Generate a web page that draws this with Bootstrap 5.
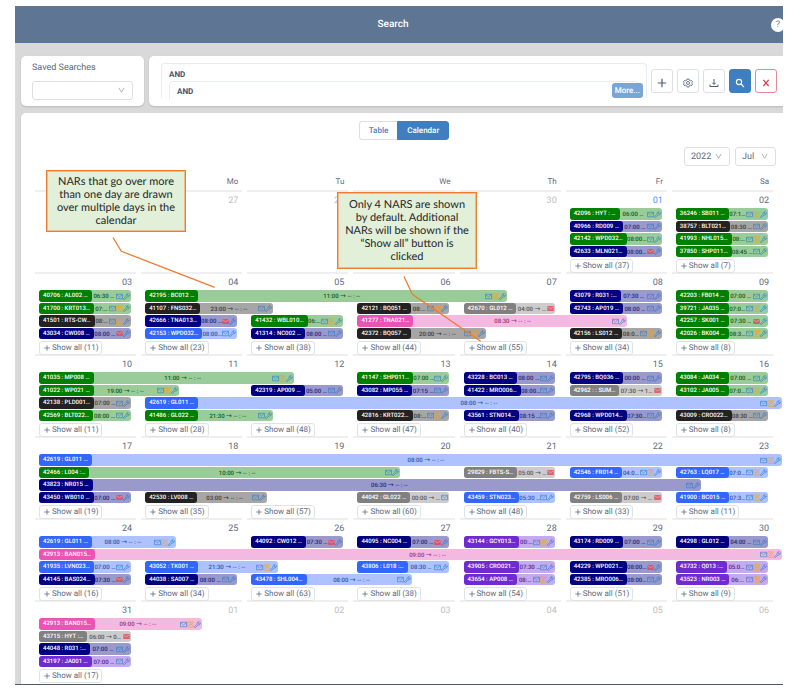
<!DOCTYPE html>
<html lang="en">
<head>
<meta charset="utf-8">
<meta name="viewport" content="width=device-width, initial-scale=1">
<title>Search</title>
<link href="https://cdn.jsdelivr.net/npm/bootstrap@5.3.0/dist/css/bootstrap.min.css" rel="stylesheet">
<style>
  body { background: #fff; font-family: Roboto, "Liberation Sans", sans-serif; font-size: 8px; line-height: 12px; color: #5c6b82; text-rendering: geometricPrecision; }
  button, select { text-rendering: inherit; }
  .app-frame { margin: 6px 28px 6px 15px; background: #d9d9d9; border-bottom: 1px solid #4c5a6e; }
  .app-top { height: 37px; background: #5f7594; color: #fff; }
  .app-top h1 { font-size: 10px; line-height: 12px; font-weight: 500; }
  .help-btn { width: 14px; height: 14px; margin-right: -2px; background: #fff; color: #5f7594; font-size: 9px; line-height: 14px; }
  .query-strip { gap: 5px; padding-left: 6px; margin: 13px 0 7px; height: 50px; }
  .panel { background: #fff; box-shadow: 0 1px 2px rgba(0,0,0,.15); }
  .saved-panel { width: 123px; border-radius: 5px; padding: 6px 11px; }
  .saved-panel .pick { margin-top: 7px; }
  .query-panel { border-radius: 5px 0 0 5px; padding: 7px 6px 0 12px; }
  .saved-panel label { font-size: 9px; font-weight: 400; color: #52688a; }
  .form-select.pick { height: 19px; padding: 0 16px 0 6px; font-size: 9px; line-height: 12px; color: #5c6b82; border: 1px solid #dfdfdf; border-radius: 3px;
    background-image: url("data:image/svg+xml,%3csvg xmlns='http://www.w3.org/2000/svg' viewBox='0 0 8 8'%3e%3cpath fill='none' stroke='%23aaa' d='M1 1l3 5 3-5'/%3e%3c/svg%3e");
    background-position: right 7px center; background-size: 7px 7px; }
  .pick-year { width: 46px; } .pick-month { width: 41px; }
  .rule { border: 1px solid #e4eef7; border-bottom: 0; border-radius: 4px 4px 0 0; padding: 5px 7px 0; height: 35px; color: #3f5270; font-weight: 700; }
  .rule .rule { height: 18px; padding-top: 4px; }
  .more-btn { right: 3px; bottom: 0; height: 15px; padding: 0 3px; font-size: 8px; line-height: 13px; font-weight: 500; color: #fff; background: #7aa6d6; border-radius: 3px; }
  .tools { padding: 6px 0 0 4px; }
  .tool { width: 22px; height: 24px; border: 1px solid #dcdfe4; border-radius: 3px; color: #4c5d78; background: #fff; }
  .tool svg { width: 10px; height: 10px; }
  .tool-go { background: #3f7fc1; border-color: #3f7fc1; color: #fff; }
  .tool-clear { border-color: #e58a94; color: #dc3545; }
  .main-panel { border-radius: 5px 0 0 0; margin-left: 6px; padding: 8px 7px 0 11px; }
  .view-btn { height: 19px; padding: 0 9px; font-size: 8px; line-height: 12px; font-weight: 500; color: #4a86c8; border: 1px solid #dfdfdf; border-radius: 3px; }
  .view-btn.active { background: #3f7fc1; border-color: #3f7fc1; color: #fff; }
  .pickers { gap: 5px; margin-top: 7px; }
  .cal { margin: 0 -2px 0 3px; }
  .cal-grid { grid-template-columns: repeat(7, minmax(0, 1fr)); }
  .dow { margin-right: 5px; padding: 10px 4px 2px; border-bottom: 2px solid #efefef; text-align: right; }
  .daynum { height: 16px; padding: 2px 9px 0 0; font-size: 9px; line-height: 14px; text-align: right; }
  .daynum.off { color: #bdbdbd; } .daynum.now { color: #4a96f0; }
  .lanes { height: 49px; grid-template-rows: repeat(4, minmax(0, 1fr)); row-gap: 1px; }
  .foot { height: 17px; margin-right: 5px; padding: 2px 0 0 4px; border-bottom: 2px solid #efefef; }
  .week:last-child .foot { border-color: #fff; }
  .all-btn { height: 14px; padding: 0 3px 0 4px; font-size: 8px; line-height: 12px; color: #5c6b82; border: 1px solid #e2e2e2; border-radius: 3px; background: #fff; }
  .all-btn svg { width: 6px; height: 6px; margin-right: 2px; }
  .ev { margin-left: 4px; border-radius: 3px; font-size: 6px; line-height: 11px; padding-right: 1px; white-space: nowrap; background: var(--soft); color: var(--ink); z-index: 1; }
  .ev-name { padding: 0 4px; color: #fff; background: var(--full); border-radius: 3px; font-weight: 500; }
  .ev-time { padding-top: 1px; font-weight: 500; }
  .arr { font-family: "DejaVu Sans", sans-serif; font-size: 7px; line-height: 1; }
  .ev svg { width: 7px; height: 7px; margin-top: 1px; opacity: .8; }
  .g { --full: #008000; --soft: #99cc99; --ink: #14581c; }
  .n { --full: #000080; --soft: #9999cc; --ink: #26267c; }
  .k { --full: #222; --soft: #a6a6a6; --ink: #3a3a3a; }
  .b { --full: #3366ff; --soft: #adc2ff; --ink: #35529c; }
  .p { --full: #e855b5; --soft: #f4b9e1; --ink: #a3307c; }
  .s { --full: #808080; --soft: #cccccc; --ink: #555; }
  .v { --full: #6f2ad1; --soft: #c5aaed; --ink: #55278f; }
  .note { z-index: 3; width: 140px; border: 1px solid #ed7d31; outline: 1px solid #f6b78b; outline-offset: -2px; background: #e2efd9; color: #262626; font-family: Lato, "Open Sans", sans-serif; font-size: 11px; line-height: 13px; text-align: center; padding: 4px 0; white-space: nowrap; }
  .note-days { left: 31px; top: 164px; }
  .note-all { left: 322px; top: 186px; padding: 5px 0; }
  .leaders { z-index: 4; left: 0; top: 0; width: 520px; height: 360px; pointer-events: none; }
</style>
<script src="https://cdn.jsdelivr.net/npm/bootstrap@5.3.0/dist/js/bootstrap.bundle.min.js"></script>
</head>
<body>
<svg class="d-none" xmlns="http://www.w3.org/2000/svg">
  <symbol id="i-e" viewBox="0 0 14 14"><path d="M1 2.500h12v9H1zM1.500 3L7 8l5.500-5" fill="none" stroke="#2f7cc9" stroke-width="1.500"/></symbol>
  <symbol id="i-r" viewBox="0 0 14 14"><path d="M.5 2h13v10H.5z" fill="#e04a58"/><path d="M1 3.500l6 4 6-4" fill="none" stroke="#f4b0b5" stroke-width="1.400"/></symbol>
  <symbol id="i-x" viewBox="0 0 14 14"><path d="M8 1.800H1.500v10.700h10.700V7M5 9l.6-2.700L11.300.8l1.800 1.800-5.600 5.600z" fill="none" stroke="#f2a020" stroke-width="1.800"/></symbol>
  <symbol id="i-w" viewBox="0 0 14 14"><path d="M1.200 11.200l5-5C5.500 3.500 7.500 1 10.500 1.300L8.700 3.400l.4 1.700 1.700.4 2.100-1.900c.3 3-2.100 5-4.800 4.300l-5 5c-1.300.8-2.700-.5-1.900-1.700z" fill="none" stroke="#2f7cc9" stroke-width="1.500"/></symbol>
  <symbol id="i-plus" viewBox="0 0 10 10"><path d="M5 .5v9M.5 5h9" fill="none" stroke="currentColor" stroke-width="1.300"/></symbol>
</svg>

<div class="app-frame position-relative overflow-hidden">
  <header class="app-top d-flex align-items-center">
    <h1 class="flex-grow-1 text-center m-0">Search</h1>
    <button type="button" class="help-btn btn p-0 border-0 rounded-circle" aria-label="Help">?</button>
  </header>

  <section class="query-strip d-flex">
    <div class="panel saved-panel flex-shrink-0">
      <label for="saved" class="d-block">Saved Searches</label>
      <select id="saved" class="form-select pick"><option></option></select>
    </div>
    <div class="panel query-panel flex-grow-1 d-flex">
      <div class="rule flex-grow-1 position-relative">
        AND
        <div class="rule">AND</div>
        <button type="button" class="more-btn btn border-0 position-absolute">More...</button>
      </div>
      <div class="tools d-flex gap-1">
        <button type="button" class="tool btn p-0" aria-label="Add"><svg viewBox="0 0 10 10"><path d="M5 .8v8.400M.8 5h8.400" stroke="currentColor" stroke-width="1.200" fill="none"/></svg></button>
        <button type="button" class="tool btn p-0" aria-label="Settings"><svg viewBox="0 0 20 20" fill="none" stroke="currentColor" stroke-width="1.600"><path d="M8 2h4l.6 2.500 2 1.100 2.500-.7 2 3.400L17.200 10l1.900 1.700-2 3.400-2.500-.7-2 1.100L12 18H8l-.6-2.500-2-1.100-2.500.7-2-3.400L2.800 10 .9 8.300l2-3.400 2.500.7 2-1.100z"/><circle cx="10" cy="10" r="3"/></svg></button>
        <button type="button" class="tool btn p-0" aria-label="Download"><svg viewBox="0 0 10 10" fill="none" stroke="currentColor"><path d="M5 1v5M3.300 4.800L5 6.500l1.700-1.700M1 6.500v2h8v-2"/></svg></button>
        <button type="button" class="tool tool-go btn p-0" aria-label="Search"><svg viewBox="0 0 10 10" fill="none" stroke="currentColor" stroke-width="1.100"><circle cx="4" cy="4" r="2.600"/><path d="M6 6l3 3"/></svg></button>
        <button type="button" class="tool tool-clear btn p-0" aria-label="Clear"><svg viewBox="0 0 10 10" fill="none" stroke="currentColor" stroke-width="1.200"><path d="M2.300 1.800l5.400 6.400M7.700 1.800L2.300 8.200"/></svg></button>
      </div>
    </div>
  </section>

  <main class="panel main-panel">
    <div class="d-flex justify-content-center" role="group" aria-label="View">
      <button type="button" class="view-btn btn rounded-end-0 border-end-0">Table</button>
      <button type="button" class="view-btn btn rounded-start-0 active">Calendar</button>
    </div>
    <div class="pickers d-flex justify-content-end">
      <select class="form-select pick pick-year" aria-label="Year"><option>2022</option></select>
      <select class="form-select pick pick-month" aria-label="Month"><option>Jul</option></select>
    </div>
    <div class="cal" id="cal">
      <div class="d-grid cal-grid">
        <div class="dow"></div><div class="dow">Mo</div><div class="dow">Tu</div><div class="dow">We</div><div class="dow">Th</div><div class="dow">Fr</div><div class="dow">Sa</div>
      </div>
    </div>
  </main>

  <aside class="note note-days position-absolute">NARs that go over more<br>than one day are drawn<br>over multiple days in the<br>calendar</aside>
  <aside class="note note-all position-absolute">Only 4 NARS are shown<br>by default. Additional<br>NARs will be shown if the<br>“Show all” button is<br>clicked</aside>
  <svg class="leaders position-absolute" viewBox="0 0 520 360" fill="none" stroke="#ed7d31" stroke-width="1.300">
    <path d="M98 231.500L106.300 245.300L199.700 281.300"/><path d="M389 270.500L397.300 288.300L465.700 335.300"/>
  </svg>
</div>

<script>
  // Event: [first day column, lane, colour, name, time, icons, length in days]
  const T = ' → -- : --';
  const weeks = [
    { days: ['', 27, 28, '', 30, '01', '02'], all: [0,0,0,0,0,37,7], ev: [
      [5,1,'g','42096 : HYT : …','06:00 …','ew'],[5,2,'n','40966 : RD009 …','07:00 …','ew'],[5,3,'g','42142 : WPD032…','08:00…','ew'],[5,4,'n','42633 : MLN021…','08:00…','rw'],
      [6,1,'g','36246 : SB011 …','07:1…','exw'],[6,2,'k','38757 : BLT021…','08:30 …','ew'],[6,3,'g','41993 : NHL015…','08:…','exw'],[6,4,'g','37850 : SHP011…','08:45 …','ew']] },
    { days: ['03','04','05','06','07','08','09'], all: [11,23,38,44,55,34,8], ev: [
      [0,1,'g','40706 : AL002 …','06:30 …','ew'],[0,2,'g','41700 : KRT013…','07:…','exw'],[0,3,'k','41501 : RTS-CW…','08:…','exw'],[0,4,'n','43034 : CW008 …','08:00 …','rw'],
      [1,1,'g','42195 : BC012 …','11:00'+T,'exw',3.41],[1,2,'k','41107 : FNS032…','23:00'+T,'ew',1.2],[1,3,'n','42666 : TNA013…','08:00 …','rw'],[1,4,'b','42153 : WPD032…','08:00…','ew'],
      [2,3,'g','41432 : WBL010…','06:…','exw'],[2,4,'n','41314 : NC002 …','08:00 …','ew'],
      [3,2,'k','42121 : BQ051 …','08:…','exw'],[3,3,'p','41277 : TNA021…','08:30'+T,'ew',2.54],[3,4,'k','42372 : BQ057 …','20:00'+T,'exw',1.21],
      [4,2,'s','42670 : GL012 …','04:00 → …','r'],
      [5,1,'n','43079 : R031 :…','07:30 …','ew'],[5,2,'n','42743 : AP019 …','08:00 …','ew'],[5,4,'k','42156 : LS012 …','08:0…','exw'],
      [6,1,'g','42203 : FB014 …','07:00 …','ew'],[6,2,'g','39721 : JA035 …','07:0…','exw'],[6,3,'g','42257 : SK001 …','07:30 …','rw'],[6,4,'g','42026 : BK004 …','08:3…','exw']] },
    { days: [10,11,12,13,14,15,16], all: [11,28,48,47,40,52,8], ev: [
      [0,1,'g','41035 : MP008 …','11:00'+T,'exw',2.4],[0,2,'g','41022 : WP021 …','19:00'+T,'exw',1.32],[0,3,'k','42138 : PLD001…','07:00 …','ew'],[0,4,'g','42569 : BLT022…','08:00 …','ew'],
      [1,3,'b','42619 : GL011 …','08:00'+T,'exw',6],[1,4,'g','41486 : GL022 …','21:30'+T,'ew',1.2],
      [2,2,'n','42319 : AP009 …','05:00 …','ew'],
      [3,1,'g','41147 : SHP011…','07:00 …','ew'],[3,2,'n','43082 : MP055 …','07:15 …','ew'],[3,4,'k','42816 : KRT022…','08:…','exw'],
      [4,1,'n','43228 : BC013 …','08:00 …','ew'],[4,2,'n','41422 : MRO006…','08:00…','ew'],[4,4,'n','43561 : STN014…','08:15 …','ew'],
      [5,1,'n','42795 : BQ036 …','00:00 …','ew'],[5,2,'s','42962 : : SUM…','07:30 → 1…','r'],[5,4,'n','42968 : WPD014…','07:30…','ew'],
      [6,1,'g','43084 : JA034 …','07:00 …','ew'],[6,2,'g','43102 : JA005 …','07:0…','exw'],[6,4,'k','43009 : CRO022…','08:30 …','ew']] },
    { days: [17,18,19,20,21,22,23], all: [19,35,57,60,48,33,11], ev: [
      [0,1,'b','42619 : GL011 …','08:00'+T,'exw',7],[0,2,'g','42466 : L004 :…','10:00'+T,'ew',3.4],[0,3,'n','43823 : NR015 …','06:30'+T,'ew',6.24],[0,4,'n','43450 : WB010 …','07:00 …','rw'],
      [1,4,'k','42530 : LV008 …','03:00'+T,'ew',1.15],[3,4,'s','44042 : GL022 …','00:00 → …','e'],
      [4,2,'s','29829 : FBTS-S…','05:00 → …','r'],[4,4,'b','43459 : STN023…','05:30 …','ew'],
      [5,2,'b','42546 : FR014 …','04:0…','exw'],[5,4,'s','42759 : LS006 …','07:00 → …','r'],
      [6,2,'b','42763 : LQ017 …','07:0…','exw'],[6,4,'b','41900 : BC015 …','07:3…','exw']] },
    { days: [24,25,26,27,28,29,30], all: [16,34,63,38,54,51,9], ev: [
      [0,1,'b','42619 : GL011 …','08:00'+T,'exw',1.29],[0,2,'p','42913 : BAN015…','09:00'+T,'exw',7],[0,3,'b','41935 : LVN023…','07:00 …','ew'],[0,4,'n','44145 : BAS024…','07:30 …','rw'],
      [1,3,'b','43052 : TK001 …','21:30'+T,'exw',1.25],[1,4,'n','44038 : SA007 …','08:00 …','ew'],
      [2,1,'n','44092 : CW012 …','07:30 …','rw'],[2,4,'b','43478 : SHL004…','08:00'+T,'ew',1.51],
      [3,1,'n','44095 : NC004 …','07:00 …','rw'],[3,3,'b','43806 : L018 :…','08:30 …','ew'],
      [4,1,'v','43144 : GCY013…','00:…','exw'],[4,3,'v','43905 : CRO021…','07:30 …','ew'],[4,4,'v','43654 : AP008 …','08:…','exw'],
      [5,1,'n','43174 : RD009 …','07:00 …','ew'],[5,3,'n','44229 : WPD021…','08:00…','rw'],[5,4,'n','42385 : MRO006…','08:00…','ew'],
      [6,1,'n','44298 : GL012 …','04:00 …','ew'],[6,3,'v','43732 : Q013 :…','05:0…','exw'],[6,4,'v','43523 : NR003 …','06:…','exw']] },
    { days: [31,'01','02','03','04','05','06'], all: [17,0,0,0,0,0,0], ev: [
      [0,1,'p','42913 : BAN015…','09:00'+T,'exw',1.54],[0,2,'s','43715 : HYT :…','06:00 → 0…','r'],[0,3,'n','44048 : R031 :…','07:00 …','ew'],[0,4,'v','43197 : JA001 …','07:00 …','ew']] }
  ];
  const icon = n => `<svg class="flex-shrink-0"><use href="#i-${n}"/></svg>`;
  document.getElementById('cal').insertAdjacentHTML('beforeend', weeks.map((w, wi) => {
    const nums = w.days.map((d, i) => {
      const off = (wi === 0 && i < 5) || (wi === 5 && i > 0);
      return `<div class="daynum ${off ? 'off' : wi === 0 && i === 5 ? 'now' : ''}">${d}</div>`;
    }).join('');
    const evs = w.ev.map(([c, lane, col, name, time, ics, len = 0.866]) =>
      `<div class="ev ${col} d-flex align-items-stretch" style="grid-area:${lane}/${c + 1};width:${(len * 100).toFixed(1)}%">` +
      `<span class="ev-name flex-shrink-0">${name}</span><span class="ev-time flex-grow-1 text-center">${time.replace('→', '<span class="arr">→</span>')}</span>` +
      `<span class="d-flex align-items-center">${[...ics].map(icon).join('')}</span></div>`).join('');
    const foot = w.all.map(n => `<div class="foot">${n ? `<button type="button" class="all-btn btn d-flex align-items-center">${icon('plus')}Show all (${n})</button>` : ''}</div>`).join('');
    return `<div class="week"><div class="d-grid cal-grid">${nums}</div><div class="lanes d-grid cal-grid">${evs}</div><div class="d-grid cal-grid">${foot}</div></div>`;
  }).join(''));
</script>
</body>
</html>
